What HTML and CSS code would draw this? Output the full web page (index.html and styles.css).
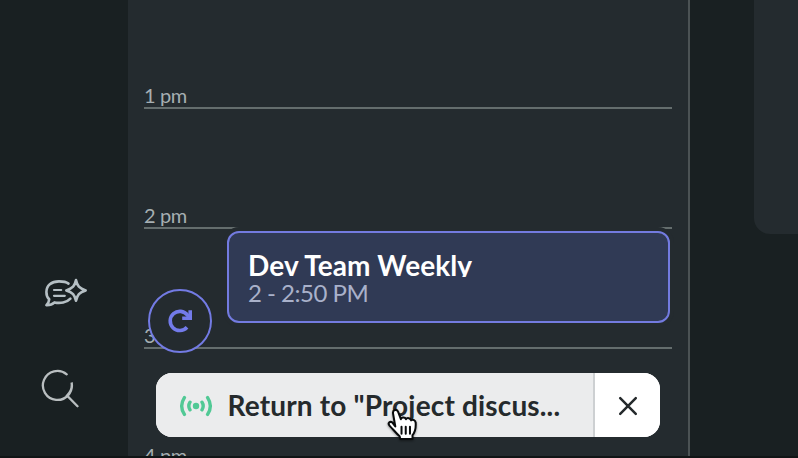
FILE: index.html
```html
<!DOCTYPE html>
<html lang="en">
<head>
<meta charset="utf-8">
<title>Calendar</title>
<link rel="stylesheet" href="styles.css">
</head>
<body>
<div class="app">
  <nav class="rail">
    <svg class="icon-chat" width="46" height="32" viewBox="0 0 46 32" fill="none" stroke="#b5bfc4" stroke-width="2.6" stroke-linejoin="round" stroke-linecap="round">
      <path d="M26.5 6.6C23.8 4.6 20.7 4.4 17 4.4C9.3 4.4 4.4 8.6 4.4 15C4.4 18.1 5.2 20.5 7.2 22.3C7 24.8 6.2 26.5 4.4 28.2C7.6 28.3 10.3 27.6 12.5 25.4C18 26.6 24.8 25.6 28.4 21.6"/>
      <path d="M34 3C35.3 9 37.2 11.3 43.7 13.4C37.2 15.5 35.3 18 34 23.8C32.7 18 30.7 15.5 24.3 13.4C30.7 11.3 32.7 9 34 3Z"/>
      <path d="M12 13H19.2M12 18.8H22.8" stroke-width="2.2"/>
    </svg>
    <svg class="icon-search" width="42" height="42" viewBox="0 0 42 42" fill="none" stroke="#b9bec0" stroke-width="2.3" stroke-linecap="round">
      <path d="M25.7 5.3A14.5 14.5 0 1 0 30.6 13.5A14.5 14.5 0 0 1 26 26.5L36.5 37.2"/>
    </svg>
  </nav>
  <main class="calendar">
    <div class="hour">1 pm</div>
    <div class="hour">2 pm</div>
    <div class="hour">3 pm</div>
    <div class="hour">4 pm</div>
    <article class="event">
      <h2>Dev Team Weekly</h2>
      <p>2 - 2:50 PM</p>
    </article>
    <button class="refresh" aria-label="Refresh">
      <svg width="28" height="28" viewBox="0 0 28 28" fill="none" stroke="#737bea" stroke-width="3.6">
        <path d="M21 20.3A9.6 9.6 0 1 1 21.5 8.2L23 10.2" stroke-linecap="butt"/>
        <path d="M16.2 11.2H24.2V3.2"/>
      </svg>
    </button>
    <div class="return">
      <div class="return-main">
        <svg width="34" height="24" viewBox="0 0 34 24" fill="none" stroke="#51c995" stroke-width="3.4" stroke-linecap="round">
          <circle cx="17" cy="12" r="3.2" fill="#51c995" stroke="none"/>
          <path d="M11 8.2Q8.6 12 11 15.8M23 8.2Q25.4 12 23 15.8M5.4 3.6Q-.1 12 5.4 20.4M28.6 3.6Q34.1 12 28.6 20.4"/>
        </svg>
        <span>Return to "Project discus...</span>
      </div>
      <button class="close" aria-label="Close">
        <svg width="20" height="20" viewBox="0 0 20 20" stroke="#252a2c" stroke-width="2.5" stroke-linecap="round"><path d="M2.2 2.2L17.8 17.8M17.8 2.2L2.2 17.8"/></svg>
      </button>
    </div>
    <svg class="cursor" width="34" height="38" viewBox="0 0 32 36" fill="#fff" stroke="#080a0b" stroke-width="1.9" stroke-linejoin="round" stroke-linecap="round">
      <path d="M8.7 19.4L6.6 7.2C5.9 3.5 10.2 2.4 11.4 5.6L14 12.5C14.2 10.4 18 10.1 18.8 12.5C20 10.7 23 11.4 23.6 13.6C25.2 12.4 28 13.6 28 16C28.3 20.8 28 24.3 25 27.6V31.2H13.4L12.8 28.6C9.5 26.1 7 22.4 3.4 18.8C1 16.4 3.7 13.9 6 15.7Z"/>
      <path d="M14.6 19.6V26.4M18.6 19.6V26.4M22.6 19.6V26.4"/>
    </svg>
  </main>
  <aside class="side"><div class="card"></div></aside>
</div>
</body>
</html>
```
FILE: styles.css
```css
* { box-sizing: border-box; }
body { margin: 0; background: #192022; font-family: Lato, sans-serif; }
.app {
  position: relative;
  display: grid;
  grid-template-columns: 128px 562px 108px;
  height: 458px;
  overflow: hidden;
}
.app::after {
  content: "";
  position: absolute;
  inset: auto 0 0;
  height: 2px;
  background: #101516;
}
.rail {
  display: flex;
  flex-direction: column;
  gap: 60px;
  padding: 277px 0 0 41px;
}
.rail svg { flex: none; display: block; }
.icon-chat { margin-left: 1px; }
.calendar {
  position: relative;
  height: 458px;
  padding: 0 16px;
  overflow: hidden;
  background: #242b2f;
  border-right: 2px solid #4b5254;
}
.hour {
  display: flex;
  align-items: flex-end;
  height: 120px;
  padding: 0 0 1px;
  border-bottom: 2px solid #646d6d;
  color: #a6afb2;
  font-size: 20px;
  letter-spacing: -.4px;
  line-height: 22px;
}
.hour:first-child { height: 109px; }
.event {
  position: absolute;
  top: 231px;
  left: 99px;
  width: 443px;
  height: 92px;
  padding: 19px;
  border: 2px solid #737be0;
  border-radius: 12px;
  background: #303a55;
  box-shadow: 0 0 0 4px #242b2f;
}
.event h2 {
  height: 25px;
  margin: 0;
  overflow: hidden;
  color: #fff;
  font-size: 28px;
  font-weight: 700;
  letter-spacing: .1px;
  line-height: 27px;
}
.event p {
  margin: 1px 0 0;
  color: #a9b1ca;
  font-size: 24px;
  letter-spacing: -.5px;
  line-height: 30px;
}
.refresh {
  position: absolute;
  top: 289px;
  left: 20px;
  display: grid;
  place-items: center;
  width: 64px;
  height: 64px;
  padding: 0;
  border: 2px solid #737be4;
  border-radius: 50%;
  background: #242b2f;
}
.return {
  position: absolute;
  top: 373px;
  left: 28px;
  display: flex;
  width: 504px;
  height: 64px;
  overflow: hidden;
  border-radius: 16px;
  background: #fff;
}
.return-main {
  display: flex;
  align-items: center;
  gap: 14.5px;
  width: 439px;
  padding: 0 0 0 23px;
  border-right: 2px solid #cdd0d2;
  background: #ebeced;
  color: #252a2c;
  font-size: 28px;
  font-weight: 700;
  letter-spacing: .16px;
  line-height: 34px;
  white-space: nowrap;
}
.return-main svg { margin-top: 1px; }
.close {
  display: grid;
  flex: 1;
  place-items: center;
  padding: 2px 0 0;
  border: 0;
  background: #fff;
}
.cursor {
  position: absolute;
  top: 406px;
  left: 258px;
  filter: drop-shadow(0 1px 1px #0006);
}
.card {
  height: 234px;
  margin-left: 64px;
  border-bottom-left-radius: 16px;
  background: #242b2f;
}
```
